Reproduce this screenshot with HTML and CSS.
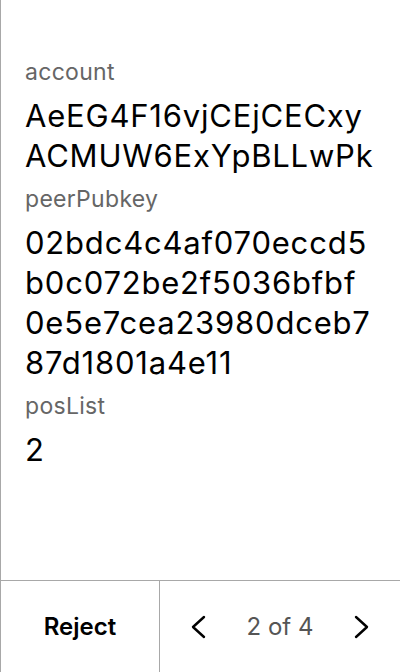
FILE: index.html
```html
<!DOCTYPE html>
<html>
<head>
<meta charset="utf-8">
<link rel="stylesheet" href="styles.css">
</head>
<body>
<div class="screen">
  <main class="content">
    <div class="field">
      <div class="label">account</div>
      <div class="value">AeEG4F16vjCEjCECxy ACMUW6ExYpBLLwPk</div>
    </div>
    <div class="field">
      <div class="label">peerPubkey</div>
      <div class="value">02bdc4c4af070eccd5 b0c072be2f5036bfbf 0e5e7cea23980dceb7 87d1801a4e11</div>
    </div>
    <div class="field">
      <div class="label">posList</div>
      <div class="value">2</div>
    </div>
  </main>
  <footer class="footer">
    <button class="reject">Reject</button>
    <div class="pager">
      <button class="nav" aria-label="Previous">
        <svg width="28" height="28" viewBox="0 0 28 28"><path d="M19 4 L8 14 L19 24" fill="none" stroke="#000" stroke-width="2.4" stroke-linecap="round" stroke-linejoin="round"/></svg>
      </button>
      <span class="count">2 of 4</span>
      <button class="nav" aria-label="Next">
        <svg width="28" height="28" viewBox="0 0 28 28"><path d="M9 4 L20 14 L9 24" fill="none" stroke="#000" stroke-width="2.4" stroke-linecap="round" stroke-linejoin="round"/></svg>
      </button>
    </div>
  </footer>
</div>
</body>
</html>
```
FILE: styles.css
```css
* { box-sizing: border-box; }
html, body { margin: 0; padding: 0; background: #fff; }
body { font-family: Inter, "Noto Sans", sans-serif; }
.screen {
  width: 400px;
  height: 672px;
  display: flex;
  flex-direction: column;
  border-left: 1px solid #a8a8a8;
}
.content {
  flex: 1;
  padding: 57px 4px 0 24px;
}
.field { margin-bottom: 8px; }
.label {
  font-size: 23px;
  line-height: 30px;
  color: #666;
  margin-bottom: 9px;
  letter-spacing: 0.3px;
}
.value {
  font-size: 31px;
  line-height: 40px;
  color: #000;
  width: 372px;
  letter-spacing: 0.8px;
}
.footer {
  height: 92px;
  border-top: 1px solid #a8a8a8;
  display: flex;
}
.footer button {
  background: none;
  border: none;
  padding: 0;
  font-family: inherit;
  cursor: pointer;
}
.reject {
  width: 159px;
  border-right: 1px solid #a8a8a8 !important;
  font-size: 24px;
  font-weight: 600;
  color: #000;
}
.pager {
  flex: 1;
  display: flex;
  align-items: center;
  justify-content: space-between;
  padding: 0 25px 0 25px;
}
.nav {
  width: 28px;
  height: 28px;
  display: flex;
  align-items: center;
  justify-content: center;
}
.count {
  font-size: 24px;
  color: #555;
}
```
